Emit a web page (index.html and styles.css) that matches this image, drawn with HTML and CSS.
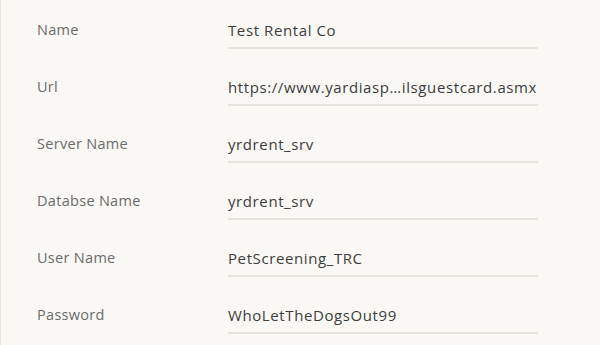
FILE: index.html
```html
<!DOCTYPE html>
<html lang="en">
<head>
    <meta charset="UTF-8">
    <meta name="viewport" content="width=device-width, initial-scale=1.0">
    <title>Integration Settings</title>
    <link rel="stylesheet" href="styles.css">
</head>
<body>
    <div class="panel">
        <div class="field">
            <div class="label">Name</div>
            <div class="value">Test Rental Co</div>
        </div>
        <div class="field">
            <div class="label">Url</div>
            <div class="value">https://www.yardiasp…ilsguestcard.asmx</div>
        </div>
        <div class="field">
            <div class="label">Server Name</div>
            <div class="value">yrdrent_srv</div>
        </div>
        <div class="field">
            <div class="label">Databse Name</div>
            <div class="value">yrdrent_srv</div>
        </div>
        <div class="field">
            <div class="label">User Name</div>
            <div class="value">PetScreening_TRC</div>
        </div>
        <div class="field">
            <div class="label">Password</div>
            <div class="value">WhoLetTheDogsOut99</div>
        </div>
    </div>
</body>
</html>
```

FILE: styles.css
```css
body {
    margin: 0;
    font-family: "Open Sans", Lato, sans-serif;
    background-color: #f9f8f5;
}

.panel {
    min-height: 345px;
    box-sizing: border-box;
    border-left: 1px solid #e4e2dd;
    padding: 0 0 0 36px;
}

.field {
    display: flex;
    align-items: flex-end;
    padding-top: 20px;
    margin-bottom: 8px;
}

.label {
    width: 191px;
    font-size: 14.5px;
    line-height: 20px;
    letter-spacing: 0.3px;
    color: #6b6b6b;
    padding-bottom: 9px;
}

.value {
    width: 310px;
    font-size: 15px;
    line-height: 20px;
    letter-spacing: 0.6px;
    color: #3d3d3d;
    padding-bottom: 7px;
    border-bottom: 2px solid #e6e4df;
    white-space: nowrap;
}
```
